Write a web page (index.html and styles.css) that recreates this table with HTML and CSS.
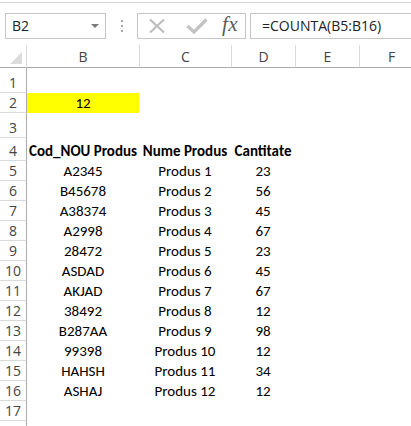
FILE: index.html
```
<!DOCTYPE html>
<html>
<head>
<meta charset="utf-8">
<link rel="stylesheet" href="styles.css">
</head>
<body>
<div class="app">
  <div class="topline"></div>
  <div class="fbar">
    <div class="namebox">
      <span class="nb-text">B2</span>
      <span class="nb-arrow"></span>
    </div>
    <div class="grip"><i></i><i></i><i></i></div>
    <div class="btns">
      <svg class="ic-x" width="18" height="16" viewBox="0 0 18 16"><path d="M2 1.5 L16 14.5 M16 1.5 L2 14.5" stroke="#bdbdbd" stroke-width="2.2" fill="none"/></svg>
      <svg class="ic-ok" width="22" height="16" viewBox="0 0 22 16"><path d="M1.5 8 L8 14 L20.5 1.5" stroke="#c2c2c2" stroke-width="3.2" fill="none"/></svg>
      <span class="fx">fx</span>
    </div>
    <div class="formula">=COUNTA(B5:B16)</div>
  </div>
  <div class="sheet">
    <div class="ch corner"><span class="tri"></span></div>
    <div class="ch">B</div><div class="ch">C</div><div class="ch">D</div><div class="ch">E</div><div class="ch">F</div>

    <div class="rh">1</div><div class="c"></div><div class="c"></div><div class="c"></div><div class="c"></div><div class="c"></div>
    <div class="rh">2</div><div class="c yellow">12</div><div class="c"></div><div class="c"></div><div class="c"></div><div class="c"></div>
    <div class="rh">3</div><div class="c"></div><div class="c"></div><div class="c"></div><div class="c"></div><div class="c"></div>
    <div class="rh">4</div><div class="c b">Cod_NOU Produs</div><div class="c b">Nume Produs</div><div class="c b">Cantitate</div><div class="c"></div><div class="c"></div>

    <div class="rh">5</div><div class="c">A2345</div><div class="c">Produs 1</div><div class="c">23</div><div class="c"></div><div class="c"></div>
    <div class="rh">6</div><div class="c">B45678</div><div class="c">Produs 2</div><div class="c">56</div><div class="c"></div><div class="c"></div>
    <div class="rh">7</div><div class="c">A38374</div><div class="c">Produs 3</div><div class="c">45</div><div class="c"></div><div class="c"></div>
    <div class="rh">8</div><div class="c">A2998</div><div class="c">Produs 4</div><div class="c">67</div><div class="c"></div><div class="c"></div>
    <div class="rh">9</div><div class="c">28472</div><div class="c">Produs 5</div><div class="c">23</div><div class="c"></div><div class="c"></div>
    <div class="rh">10</div><div class="c">ASDAD</div><div class="c">Produs 6</div><div class="c">45</div><div class="c"></div><div class="c"></div>
    <div class="rh">11</div><div class="c">AKJAD</div><div class="c">Produs 7</div><div class="c">67</div><div class="c"></div><div class="c"></div>
    <div class="rh">12</div><div class="c">38492</div><div class="c">Produs 8</div><div class="c">12</div><div class="c"></div><div class="c"></div>
    <div class="rh">13</div><div class="c">B287AA</div><div class="c">Produs 9</div><div class="c">98</div><div class="c"></div><div class="c"></div>
    <div class="rh">14</div><div class="c">99398</div><div class="c">Produs 10</div><div class="c">12</div><div class="c"></div><div class="c"></div>
    <div class="rh">15</div><div class="c">HAHSH</div><div class="c">Produs 11</div><div class="c">34</div><div class="c"></div><div class="c"></div>
    <div class="rh">16</div><div class="c">ASHAJ</div><div class="c">Produs 12</div><div class="c">12</div><div class="c"></div><div class="c"></div>
    <div class="rh">17</div><div class="c"></div><div class="c"></div><div class="c"></div><div class="c"></div><div class="c"></div>
    <div class="rh"></div><div class="c"></div><div class="c"></div><div class="c"></div><div class="c"></div><div class="c"></div>
  </div>
</div>
</body>
</html>
```

FILE: styles.css
```
html, body {
  margin: 0;
  padding: 0;
  background: #fff;
}
.app {
  width: 411px;
  height: 426px;
  overflow: hidden;
  font-family: "Open Sans", "Noto Sans", sans-serif;
}
.topline {
  height: 2px;
  border-bottom: 1px solid #d6d6d6;
}
.fbar {
  display: flex;
  align-items: stretch;
  height: 26px;
  padding: 10px 0 6px 5px;
}
.namebox {
  border: 1px solid #c6c6c6;
  display: flex;
  align-items: center;
  justify-content: space-between;
  padding: 0 6px 0 6px;
  box-sizing: border-box;
  width: 101px;
}
.nb-text {
  font-size: 14px;
  color: #222;
  margin-top: -1px;
}
.nb-arrow {
  width: 0;
  height: 0;
  border-left: 4px solid transparent;
  border-right: 4px solid transparent;
  border-top: 4px solid #7a7a7a;
}
.grip {
  width: 31px;
  display: flex;
  flex-direction: column;
  align-items: center;
  justify-content: center;
  gap: 3px;
}
.grip i {
  display: block;
  width: 2px;
  height: 2px;
  background: #a8a8a8;
}
.btns {
  width: 109px;
  box-sizing: border-box;
  border: 1px solid #c6c6c6;
  display: flex;
  align-items: center;
  padding: 0 0 0 10px;
}
.ic-x { margin-right: 20px; }
.ic-ok { margin-right: 14px; }
.fx {
  font-family: "Liberation Serif", "DejaVu Serif", serif;
  font-style: italic;
  font-size: 21px;
  color: #5a5a5a;
  margin-top: -3px;
  letter-spacing: 0.5px;
}
.formula {
  margin-left: 4px;
  flex: 1;
  border: 1px solid #c6c6c6;
  border-right: none;
  font-size: 14px;
  color: #222;
  display: flex;
  align-items: center;
  padding-left: 11px;
  padding-bottom: 1px;
}
.sheet {
  display: grid;
  grid-template-columns: 27px 112px 92px 64px 64px 64px;
  grid-template-rows: 23px 25px 20px 25px 23px repeat(14, 20px);
}
.ch {
  border-bottom: 1px solid #ababab;
  border-left: 1px solid #dadada;
  display: flex;
  align-items: center;
  justify-content: center;
  font-size: 14px;
  color: #444;
  padding-top: 1px;
}
.ch.corner {
  border-left: none;
  border-right: 1px solid #dadada;
  position: relative;
}
.ch.corner + .ch { border-left: none; }
.tri {
  position: absolute;
  right: 4px;
  bottom: 3px;
  width: 0;
  height: 0;
  border-left: 12px solid transparent;
  border-bottom: 12px solid #dcdcdc;
}
.rh {
  border-right: 1px solid #ababab;
  border-bottom: 1px solid #dadada;
  display: flex;
  align-items: flex-end;
  justify-content: center;
  font-size: 14px;
  color: #444;
  line-height: 19px;
}
.c {
  display: flex;
  align-items: flex-end;
  justify-content: center;
  font-family: "Carlito", "Lato", sans-serif;
  font-size: 15px;
  color: #000;
  line-height: 19px;
  white-space: nowrap;
}
.c.b { font-weight: bold; }
.c.yellow { background: #ffff00; }
```
